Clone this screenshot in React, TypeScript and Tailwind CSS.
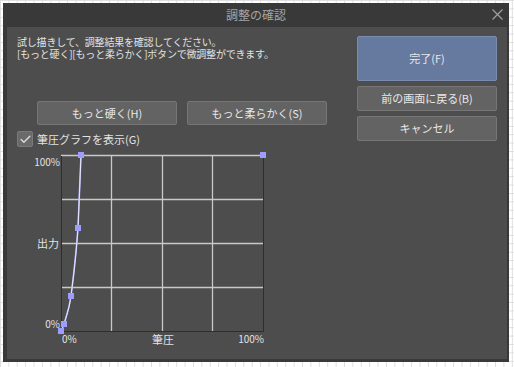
import { Check } from 'lucide-react';

const FONT = '"Noto Sans CJK JP", "Noto Sans", sans-serif';

// グラフ上の制御点 (SVG 座標)
const POINTS: [number, number][] = [
  [0, 176],
  [3, 169],
  [10, 141],
  [17, 73],
  [20, 0],
  [202, 0],
];

const CURVE = 'M0,176 C1,174 2,172 3,169 C5,162 8,155 10,141 C13,118 15,100 17,73 C18,50 19,25 20,0';

const Btn = ({ label, primary, h = 'h-[25px]' }: { label: string; primary?: boolean; h?: string }) => (
  <div
    className={`${h} w-[140px] flex items-center justify-center rounded-[2px] border text-[11px] text-[#e8e8e8] ${
      primary ? 'bg-[#66799f] border-[#7b8bb0]' : 'bg-[#636363] border-[#767676]'
    }`}
  >
    {label}
  </div>
);

const Graph = () => (
  <svg width={203} height={177} className="overflow-visible block">
    {/* grid */}
    {[0.5, 44.5, 88.5, 132.5].map((y) => (
      <line key={`h${y}`} x1={0} x2={202} y1={y} y2={y} stroke="#c9c9c9" strokeWidth={1.3} />
    ))}
    {[50.5, 101.5, 151.5].map((x) => (
      <line key={`v${x}`} x1={x} x2={x} y1={0} y2={176} stroke="#c9c9c9" strokeWidth={1.3} />
    ))}
    {/* frame */}
    <line x1={0.5} x2={0.5} y1={1} y2={177} stroke="#2e2e2e" />
    <line x1={0} x2={203} y1={176.5} y2={176.5} stroke="#2e2e2e" />
    <line x1={202.5} x2={202.5} y1={1} y2={177} stroke="#2e2e2e" />
    {/* curve */}
    <path d={CURVE} fill="none" stroke="#a9a9ff" strokeWidth={1.6} />
    <path d={CURVE} fill="none" stroke="#ececf8" strokeWidth={0.9} />
    {POINTS.map(([x, y]) => (
      <rect key={`${x}-${y}`} x={x - 3} y={y - 3} width={6} height={6} fill="#9d9dff" />
    ))}
  </svg>
);

export default function App() {
  return (
    <div
      className="w-[514px] h-[367px] bg-white bg-[linear-gradient(#dedede_1px,transparent_1px),linear-gradient(90deg,#dedede_1px,transparent_1px)] bg-[size:8.4px_8.4px] pl-[3px] pt-[3px]"
      style={{ fontFamily: FONT }}
    >
      <div className="w-[506px] h-[359px] bg-[#393939] flex flex-col">
        {/* title bar */}
        <div className="relative h-[24px] flex items-center justify-center text-[12px] text-[#a4a4a4]">
          調整の確認
          <svg className="absolute right-[6px] top-[6px]" width={11} height={11} viewBox="0 0 11 11">
            <path d="M0.5 0.5 L10.5 10.5 M10.5 0.5 L0.5 10.5" stroke="#a0a0a0" strokeWidth={1.2} />
          </svg>
        </div>

        {/* body */}
        <div className="ml-[4px] mr-[2px] mb-[3px] flex-1 bg-[#4d4d4d] flex px-[10px] pt-[9px] text-[#e2e2e2]">
          <div className="w-[340px] flex flex-col">
            <div className="text-[10px] leading-[12px] tracking-[-0.2px] flex flex-col">
              <span className="h-[12px]">試し描きして、調整結果を確認してください。</span>
              <span className="h-[12px]">[もっと硬く][もっと柔らかく]ボタンで微調整ができます。</span>
            </div>

            <div className="mt-[41px] ml-[20px] flex gap-[10px]">
              <Btn label="もっと硬く(H)" h="h-[24px]" />
              <Btn label="もっと柔らかく(S)" h="h-[24px]" />
            </div>

            <div className="mt-[6px] flex items-center gap-[4px]">
              <div className="w-[16px] h-[16px] rounded-[2px] bg-[#6a6a6a] border border-[#7a7a7a] flex items-center justify-center">
                <Check size={13} strokeWidth={2.5} className="text-[#dcdcdc]" />
              </div>
              <span className="text-[11px] leading-[16px]">筆圧グラフを表示(G)</span>
            </div>

            <div className="mt-[8px] flex">
              <div className="w-[44px] h-[177px] flex flex-col justify-between items-end pr-[1px] text-[10px] leading-[12px]">
                <span className="mt-[1px]">100%</span>
                <span className="text-[11px] pr-[1px]">出力</span>
                <span className="mb-[2px]">0%</span>
              </div>
              <Graph />
            </div>

            <div className="ml-[45px] w-[202px] grid grid-cols-3 text-[10px] leading-[12px] mt-[1px]">
              <span className="text-left">0%</span>
              <span className="text-center text-[11px]">筆圧</span>
              <span className="text-right">100%</span>
            </div>
          </div>

          <div className="w-[140px] flex flex-col gap-[5px]">
            <Btn label="完了(F)" primary h="h-[45px]" />
            <Btn label="前の画面に戻る(B)" />
            <Btn label="キャンセル" />
          </div>
        </div>
      </div>
    </div>
  );
}
